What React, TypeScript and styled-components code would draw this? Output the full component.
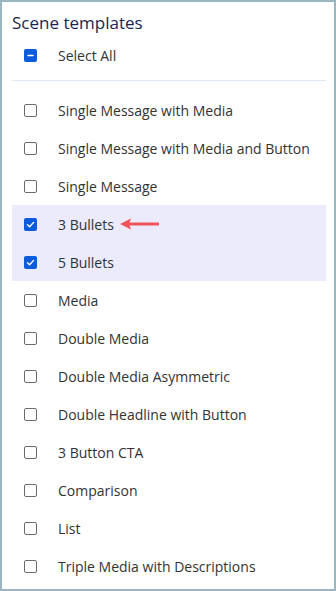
import React from "react";
import styled, { createGlobalStyle } from "styled-components";

const GlobalStyle = createGlobalStyle`
  html, body { margin: 0; padding: 0; background: #fff; }
  body { font-family: "Open Sans", "Noto Sans", sans-serif; }
  * { box-sizing: border-box; }
`;

const Frame = styled.div`
  width: 336px;
  height: 591px;
  border: 2px solid #9cb5c3;
  background: #fff;
  padding: 0 8px 0 10px;
  overflow: hidden;
`;

const Title = styled.h2`
  margin: 0;
  padding: 10px 0 0 0;
  height: 34px;
  font-size: 17px;
  font-weight: 400;
  color: #1c2652;
  line-height: 22px;
`;

const Row = styled.div<{ $selected?: boolean }>`
  display: flex;
  align-items: center;
  height: 38px;
  padding-left: 12px;
  background: ${(p) => (p.$selected ? "#ebebfb" : "transparent")};
  font-size: 14px;
  color: #333;
`;

const Divider = styled.div`
  height: 1px;
  background: #dfe8f3;
  margin: 6px 0 10px;
`;

const Box = styled.span<{ $on?: boolean }>`
  width: 13px;
  height: 13px;
  border-radius: 2px;
  flex: none;
  display: flex;
  align-items: center;
  justify-content: center;
  margin-right: 21px;
  border: ${(p) => (p.$on ? "none" : "1.5px solid #6b6b6b")};
  background: ${(p) => (p.$on ? "#0b5bdb" : "#fff")};
`;

const Label = styled.span`
  display: flex;
  align-items: center;
  gap: 6px;
`;

function Check({ state }: { state: "off" | "on" | "mixed" }) {
  if (state === "off") return <Box />;
  return (
    <Box $on>
      {state === "on" ? (
        <svg width="9" height="9" viewBox="0 0 9 9">
          <path d="M1.5 4.8 L3.6 6.8 L7.6 2.4" stroke="#fff" strokeWidth="1.4" fill="none" strokeLinecap="round" strokeLinejoin="round" />
        </svg>
      ) : (
        <svg width="9" height="9" viewBox="0 0 9 9">
          <path d="M2 4.5 H7" stroke="#fff" strokeWidth="1.6" strokeLinecap="round" />
        </svg>
      )}
    </Box>
  );
}

function Arrow() {
  return (
    <svg width="40" height="12" viewBox="0 0 40 12">
      <path d="M8 6 H39" stroke="#f2545b" strokeWidth="3" />
      <path d="M0 6 L11 0.5 L9 6 L11 11.5 Z" fill="#f2545b" />
    </svg>
  );
}

const items: ReadonlyArray<{ label: string; on?: boolean; arrow?: boolean }> = [
  { label: "Single Message with Media" },
  { label: "Single Message with Media and Button" },
  { label: "Single Message" },
  { label: "3 Bullets", on: true, arrow: true },
  { label: "5 Bullets", on: true },
  { label: "Media" },
  { label: "Double Media" },
  { label: "Double Media Asymmetric" },
  { label: "Double Headline with Button" },
  { label: "3 Button CTA" },
  { label: "Comparison" },
  { label: "List" },
  { label: "Triple Media with Descriptions" },
];

export default function App() {
  return (
    <>
      <GlobalStyle />
      <Frame>
        <Title>Scene templates</Title>
        <Row>
          <Check state="mixed" />
          <Label>Select All</Label>
        </Row>
        <Divider />
        {items.map((it) => (
          <Row key={it.label} $selected={it.on}>
            <Check state={it.on ? "on" : "off"} />
            <Label>
              {it.label}
              {it.arrow && <Arrow />}
            </Label>
          </Row>
        ))}
      </Frame>
    </>
  );
}
